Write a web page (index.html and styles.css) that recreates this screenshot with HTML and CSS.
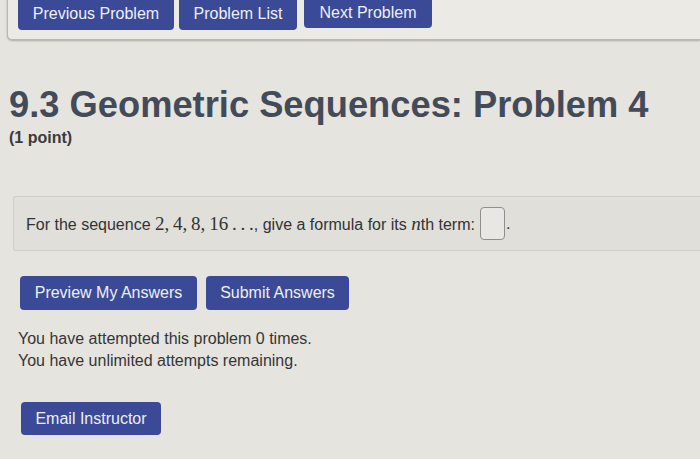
FILE: index.html
```html
<!DOCTYPE html>
<html>
<head>
<meta charset="utf-8">
<link rel="stylesheet" href="styles.css">
</head>
<body>
<div class="nav">
  <a class="btn nav-btn">Previous Problem</a>
  <a class="btn nav-btn">Problem List</a>
  <a class="btn nav-btn">Next Problem</a>
</div>
<h1 class="title">9.3 Geometric Sequences: Problem 4</h1>
<div class="points">(1 point)</div>
<div class="problem">
  <span>For the sequence <span class="math">2,&#8201;4,&#8201;8,&#8201;16&#8201;.&#8201;.&#8201;.</span>, give a formula for its <span class="math"><i>n</i></span>th term:</span>
  <span class="answer"></span><span class="dot">.</span>
</div>
<div class="actions">
  <a class="btn act-btn">Preview My Answers</a>
  <a class="btn act-btn">Submit Answers</a>
</div>
<div class="attempts">
  <div>You have attempted this problem 0 times.</div>
  <div>You have unlimited attempts remaining.</div>
</div>
<div class="email">
  <a class="btn act-btn">Email Instructor</a>
</div>
</body>
</html>
```
FILE: styles.css
```css
html, body {
  margin: 0;
  padding: 0;
}
body {
  background: #e5e4df;
  font-family: "Liberation Sans", Arial, sans-serif;
  color: #353535;
  width: 700px;
  height: 459px;
  overflow: hidden;
}
.nav {
  margin: -8px 0 0 7px;
  padding: 0 10px 9px 10px;
  background: #eceae5;
  border: 1px solid #b9b8b3;
  border-top: none;
  border-right: none;
  border-radius: 0 0 0 5px;
  box-shadow: 0 1px 2px rgba(0,0,0,0.25);
  display: flex;
  gap: 6px;
}
.btn {
  display: flex;
  align-items: center;
  justify-content: center;
  background: #3a4a96;
  color: #eef0f6;
  font-size: 16px;
  border-radius: 4px;
  text-decoration: none;
  box-sizing: border-box;
}
.nav-btn {
  height: 38px;
  padding: 6px 14px 0;
  border-radius: 0 0 4px 4px;
}
.nav-btn:nth-child(1) { width: 156px; }
.nav-btn:nth-child(2) { width: 118px; margin-left: -1px; }
.nav-btn:nth-child(3) { width: 128px; height: 36px; margin-left: 1px; }
.title {
  margin: 45px 0 0 9px;
  font-size: 36.3px;
  line-height: 40px;
  font-weight: bold;
  color: #444b58;
}
.points {
  margin: 3px 0 0 9px;
  font-size: 16px;
  font-weight: bold;
  color: #3b3b3b;
  line-height: 20px;
}
.problem {
  margin: 48px 0 0 13px;
  height: 55px;
  box-sizing: border-box;
  background: #e0dfda;
  border: 1px solid #cfcec9;
  border-right: none;
  border-radius: 3px 0 0 3px;
  display: flex;
  align-items: center;
  padding-left: 12px;
  font-size: 16px;
  color: #333;
}
.math {
  font-family: "Liberation Serif", "DejaVu Serif", serif;
  font-size: 19px;
}
.answer {
  display: inline-block;
  width: 25px;
  height: 33px;
  margin-left: 5px;
  border: 1.5px solid #8f8f8c;
  border-radius: 4px;
  background: #e8e7e3;
  box-sizing: border-box;
}
.dot {
  margin-left: 1px;
}
.actions {
  margin: 25px 0 0 20px;
  display: flex;
  gap: 9px;
}
.act-btn {
  height: 34px;
  padding: 0 14px;
}
.actions .act-btn:nth-child(1) { width: 177px; }
.actions .act-btn:nth-child(2) { width: 143px; }
.attempts {
  margin: 18px 0 0 18px;
  font-size: 16px;
  line-height: 22px;
  color: #353535;
}
.email {
  margin: 30px 0 0 21px;
  display: flex;
}
.email .act-btn { width: 140px; height: 33px; }
```
